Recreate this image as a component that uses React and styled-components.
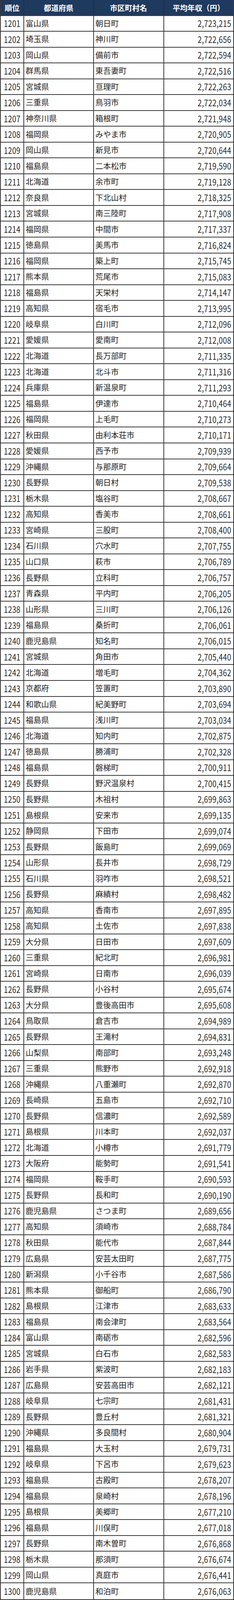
import React from 'react'
import styled, { createGlobalStyle } from 'styled-components'

const GlobalStyle = createGlobalStyle`
  html, body {
    margin: 0;
    padding: 0;
    background: #ffffff;
  }
  body {
    font-family: "Noto Sans CJK JP", "Noto Sans", sans-serif;
    color: #222222;
  }
`

// rank start 1201, one line per row: pref city income
const RAW = `富山県 朝日町 2,723,215
埼玉県 神川町 2,722,656
岡山県 備前市 2,722,594
群馬県 東吾妻町 2,722,516
宮城県 亘理町 2,722,263
三重県 鳥羽市 2,722,034
神奈川県 箱根町 2,721,948
福岡県 みやま市 2,720,905
岡山県 新見市 2,720,644
福島県 二本松市 2,719,590
北海道 余市町 2,719,128
奈良県 下北山村 2,718,325
宮城県 南三陸町 2,717,908
福岡県 中間市 2,717,337
徳島県 美馬市 2,716,824
福岡県 築上町 2,715,745
熊本県 荒尾市 2,715,083
福島県 天栄村 2,714,147
高知県 宿毛市 2,713,995
岐阜県 白川町 2,712,096
愛媛県 愛南町 2,712,008
北海道 長万部町 2,711,335
北海道 北斗市 2,711,316
兵庫県 新温泉町 2,711,293
福島県 伊達市 2,710,464
福岡県 上毛町 2,710,273
秋田県 由利本荘市 2,710,171
愛媛県 西予市 2,709,939
沖縄県 与那原町 2,709,664
長野県 朝日村 2,709,538
栃木県 塩谷町 2,708,667
高知県 香美市 2,708,661
宮崎県 三股町 2,708,400
石川県 穴水町 2,707,755
山口県 萩市 2,706,789
長野県 立科町 2,706,757
青森県 平内町 2,706,205
山形県 三川町 2,706,126
福島県 桑折町 2,706,061
鹿児島県 知名町 2,706,015
宮城県 角田市 2,705,440
北海道 増毛町 2,704,362
京都府 笠置町 2,703,890
和歌山県 紀美野町 2,703,694
福島県 浅川町 2,703,034
北海道 知内町 2,702,875
徳島県 勝浦町 2,702,328
福島県 磐梯町 2,700,911
長野県 野沢温泉村 2,700,415
長野県 木祖村 2,699,863
島根県 安来市 2,699,135
静岡県 下田市 2,699,074
長野県 飯島町 2,699,069
山形県 長井市 2,698,729
石川県 羽咋市 2,698,521
長野県 麻績村 2,698,482
高知県 香南市 2,697,895
高知県 土佐市 2,697,838
大分県 日田市 2,697,609
三重県 紀北町 2,696,981
宮崎県 日南市 2,696,039
長野県 小谷村 2,695,674
大分県 豊後高田市 2,695,608
鳥取県 倉吉市 2,694,989
長野県 王滝村 2,694,831
山梨県 南部町 2,693,248
三重県 熊野市 2,692,918
沖縄県 八重瀬町 2,692,870
長崎県 五島市 2,692,710
長野県 信濃町 2,692,589
島根県 川本町 2,692,037
北海道 小樽市 2,691,779
大阪府 能勢町 2,691,541
福岡県 鞍手町 2,690,593
長野県 長和町 2,690,190
鹿児島県 さつま町 2,689,656
高知県 須崎市 2,688,784
秋田県 能代市 2,687,844
広島県 安芸太田町 2,687,775
新潟県 小千谷市 2,687,586
熊本県 御船町 2,686,790
島根県 江津市 2,683,633
福島県 南会津町 2,683,564
富山県 南砺市 2,682,596
宮城県 白石市 2,682,583
岩手県 紫波町 2,682,183
広島県 安芸高田市 2,682,121
岐阜県 七宗町 2,681,431
長野県 豊丘村 2,681,321
沖縄県 多良間村 2,680,904
福島県 大玉村 2,679,731
岐阜県 下呂市 2,679,623
福島県 古殿町 2,678,207
福島県 泉崎村 2,678,196
島根県 美郷町 2,677,210
福島県 川俣町 2,677,018
長野県 南木曽町 2,676,868
栃木県 那須町 2,676,674
岡山県 真庭市 2,676,441
鹿児島県 和泊町 2,676,063`

const rows = RAW.split('\n').map((line, i) => {
  const [pref, city, income] = line.trim().split(' ')
  return { rank: 1201 + i, pref, city, income }
})

// the whole table fills the window, 101 equal rows (header + 100)
const Table = styled.div`
  display: grid;
  grid-template-rows: repeat(101, minmax(0, 1fr));
  width: 100vw;
  height: 100vh;
  box-sizing: border-box;
  border-left: 2px solid #3a3a3a;
  border-right: 2px solid #3a3a3a;
  border-bottom: 2px solid #3a3a3a;
  overflow: hidden;
`

const Row = styled.div`
  display: grid;
  grid-template-columns: 9.7% 30% 30.2% 1fr;
  min-height: 0;
  overflow: hidden;
  box-sizing: border-box;
  border-bottom: ${p => (p.$last ? 'none' : '2px solid #3a3a3a')};
  background: ${p => (p.$head ? '#1f3a5f' : '#ffffff')};
`

const Cell = styled.div`
  display: flex;
  align-items: center;
  justify-content: ${p => p.$align || 'flex-start'};
  min-height: 0;
  padding: 0 ${p => (p.$align === 'flex-end' ? '5px' : '4px')};
  border-left: ${p => (p.$first ? 'none' : '2px solid #3a3a3a')};
  font-size: 20px;
  line-height: 1;
  white-space: nowrap;
  overflow: hidden;
`

const HeadCell = styled(Cell)`
  justify-content: center;
  color: #ffffff;
  font-weight: 700;
  font-size: 19px;
  border-left-color: #2c2c2c;
`

const Num = styled.span`
  display: inline-block;
  font-size: 23px;
  line-height: 1;
  letter-spacing: 0.3px;
  transform: scaleX(0.82);
  transform-origin: ${p => p.$origin || 'center'};
  color: #2a2a2a;
`

export default function App() {
  return (
    <>
      <GlobalStyle />
      <Table>
        <Row $head>
          <HeadCell $first>順位</HeadCell>
          <HeadCell>都道府県</HeadCell>
          <HeadCell>市区町村名</HeadCell>
          <HeadCell>平均年収（円）</HeadCell>
        </Row>
        {rows.map((r, i) => (
          <Row key={r.rank} $last={i === rows.length - 1}>
            <Cell $first $align="center">
              <Num>{r.rank}</Num>
            </Cell>
            <Cell>{r.pref}</Cell>
            <Cell>{r.city}</Cell>
            <Cell $align="flex-end">
              <Num $origin="right">{r.income}</Num>
            </Cell>
          </Row>
        ))}
      </Table>
    </>
  )
}
